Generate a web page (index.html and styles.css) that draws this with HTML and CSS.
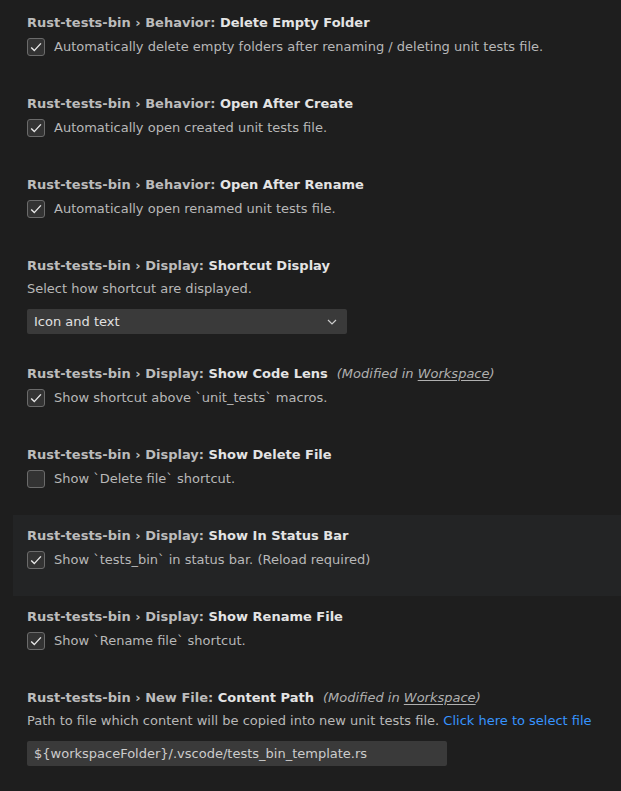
FILE: index.html
```html
<!DOCTYPE html>
<html>
<head>
<meta charset="utf-8">
<link rel="stylesheet" href="styles.css">
</head>
<body>
<div class="settings">
  <div class="item">
    <div class="title"><span class="cat">Rust-tests-bin › Behavior: </span><span class="key">Delete Empty Folder</span></div>
    <div class="check-row"><span class="box"><svg viewBox="0 0 16 16" width="16" height="16"><path d="M3.2 8.4 6.3 11.6 12.9 4.4" fill="none" stroke="#e8e8e8" stroke-width="1.4"/></svg></span><span class="desc">Automatically delete empty folders after renaming / deleting unit tests file.</span></div>
  </div>
  <div class="item">
    <div class="title"><span class="cat">Rust-tests-bin › Behavior: </span><span class="key">Open After Create</span></div>
    <div class="check-row"><span class="box"><svg viewBox="0 0 16 16" width="16" height="16"><path d="M3.2 8.4 6.3 11.6 12.9 4.4" fill="none" stroke="#e8e8e8" stroke-width="1.4"/></svg></span><span class="desc">Automatically open created unit tests file.</span></div>
  </div>
  <div class="item">
    <div class="title"><span class="cat">Rust-tests-bin › Behavior: </span><span class="key">Open After Rename</span></div>
    <div class="check-row"><span class="box"><svg viewBox="0 0 16 16" width="16" height="16"><path d="M3.2 8.4 6.3 11.6 12.9 4.4" fill="none" stroke="#e8e8e8" stroke-width="1.4"/></svg></span><span class="desc">Automatically open renamed unit tests file.</span></div>
  </div>
  <div class="item">
    <div class="title"><span class="cat">Rust-tests-bin › Display: </span><span class="key">Shortcut Display</span></div>
    <div class="desc line">Select how shortcut are displayed.</div>
    <div class="select"><span>Icon and text</span><svg class="chev" viewBox="0 0 10 6" width="10" height="6"><path d="M1 1 5 5 9 1" fill="none" stroke="#cccccc" stroke-width="1.2"/></svg></div>
  </div>
  <div class="item">
    <div class="title"><span class="cat">Rust-tests-bin › Display: </span><span class="key">Show Code Lens</span><span class="mod">(Modified in <u>Workspace</u>)</span></div>
    <div class="check-row"><span class="box"><svg viewBox="0 0 16 16" width="16" height="16"><path d="M3.2 8.4 6.3 11.6 12.9 4.4" fill="none" stroke="#e8e8e8" stroke-width="1.4"/></svg></span><span class="desc">Show shortcut above `unit_tests` macros.</span></div>
  </div>
  <div class="item">
    <div class="title"><span class="cat">Rust-tests-bin › Display: </span><span class="key">Show Delete File</span></div>
    <div class="check-row"><span class="box"></span><span class="desc">Show `Delete file` shortcut.</span></div>
  </div>
  <div class="item focused">
    <div class="title"><span class="cat">Rust-tests-bin › Display: </span><span class="key">Show In Status Bar</span></div>
    <div class="check-row"><span class="box"><svg viewBox="0 0 16 16" width="16" height="16"><path d="M3.2 8.4 6.3 11.6 12.9 4.4" fill="none" stroke="#e8e8e8" stroke-width="1.4"/></svg></span><span class="desc">Show `tests_bin` in status bar. (Reload required)</span></div>
  </div>
  <div class="item">
    <div class="title"><span class="cat">Rust-tests-bin › Display: </span><span class="key">Show Rename File</span></div>
    <div class="check-row"><span class="box"><svg viewBox="0 0 16 16" width="16" height="16"><path d="M3.2 8.4 6.3 11.6 12.9 4.4" fill="none" stroke="#e8e8e8" stroke-width="1.4"/></svg></span><span class="desc">Show `Rename file` shortcut.</span></div>
  </div>
  <div class="item">
    <div class="title"><span class="cat">Rust-tests-bin › New File: </span><span class="key">Content Path</span><span class="mod">(Modified in <u>Workspace</u>)</span></div>
    <div class="desc line">Path to file which content will be copied into new unit tests file. <span class="link">Click here to select file</span></div>
    <div class="input">${workspaceFolder}/.vscode/tests_bin_template.rs</div>
  </div>
</div>
</body>
</html>
```

FILE: styles.css
```css
html, body {
  margin: 0;
  padding: 0;
  background: #1e1e1e;
  overflow: hidden;
}
body {
  font-family: "DejaVu Sans", sans-serif;
  font-size: 13px;
  color: #cccccc;
}
.settings {
  padding: 2px 0 0 13px;
}
.item {
  padding: 12px 14px 27px;
}
.item.focused {
  background: #232425;
}
.title {
  line-height: 18px;
  height: 18px;
  font-weight: bold;
  white-space: nowrap;
}
.cat {
  color: #bcbcbc;
}
.key {
  color: #e4e4e4;
}
.mod {
  font-weight: normal;
  font-style: italic;
  color: #b0b0b0;
  margin-left: 9px;
}
.mod u {
  text-underline-offset: 2px;
}
.desc {
  color: #b8b8b8;
  line-height: 18px;
  white-space: nowrap;
}
.desc.line {
  margin-top: 5px;
  height: 18px;
}
.check-row {
  margin-top: 6px;
  display: flex;
  align-items: center;
  gap: 9px;
  height: 18px;
}
.box {
  box-sizing: border-box;
  width: 18px;
  height: 18px;
  border: 1px solid #6b6b6b;
  border-radius: 3px;
  background: #333333;
  display: flex;
  align-items: center;
  justify-content: center;
  flex: none;
}
.box svg {
  display: block;
}
.select {
  margin-top: 11px;
  width: 320px;
  height: 25px;
  box-sizing: border-box;
  background: #3a3a3a;
  border-radius: 2px;
  display: flex;
  align-items: center;
  justify-content: space-between;
  padding: 0 10px 0 7px;
  color: #e0e0e0;
}
.item:has(.select) {
  padding-bottom: 19px;
}
.item:has(.input) {
  padding-bottom: 19px;
}
.chev {
  display: block;
}
.link {
  color: #3794ff;
}
.input {
  margin-top: 11px;
  width: 420px;
  height: 25px;
  box-sizing: border-box;
  background: #3a3a3a;
  border-radius: 2px;
  padding: 0 7px;
  line-height: 25px;
  color: #cccccc;
  white-space: nowrap;
}
```
